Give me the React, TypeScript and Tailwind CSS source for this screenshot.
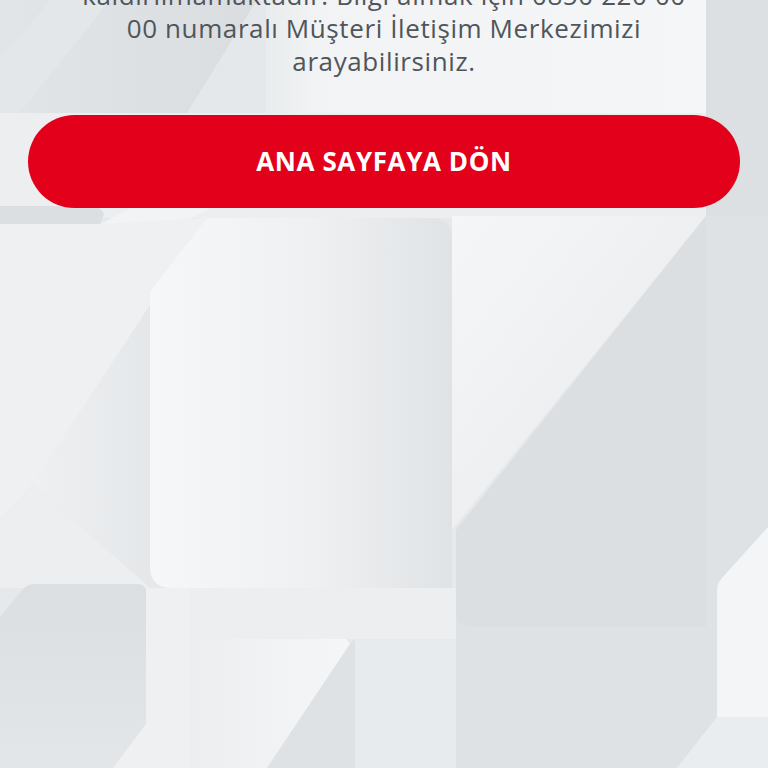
import React from 'react';

function Backdrop() {
  return (
    <svg
      className="absolute inset-0 h-full w-full"
      viewBox="0 0 768 768"
      preserveAspectRatio="none"
      aria-hidden="true"
    >
      <defs>
        <linearGradient id="bigCard" x1="0" y1="0" x2="1" y2="0">
          <stop offset="0" stopColor="#f6f7f8" />
          <stop offset="0.55" stopColor="#eef0f2" />
          <stop offset="1" stopColor="#e0e3e5" />
        </linearGradient>
        <linearGradient id="leftShade" x1="0" y1="0" x2="1" y2="0">
          <stop offset="0" stopColor="#eef0f2" />
          <stop offset="1" stopColor="#e0e3e5" />
        </linearGradient>
        <linearGradient id="lightWedge" x1="0" y1="0" x2="1" y2="1">
          <stop offset="0" stopColor="#f5f6f7" />
          <stop offset="1" stopColor="#e6e9eb" />
        </linearGradient>
        <linearGradient id="lowCard" x1="0" y1="0" x2="1" y2="0">
          <stop offset="0" stopColor="#eceef0" />
          <stop offset="1" stopColor="#f4f6f7" />
        </linearGradient>
        <linearGradient id="topLeft" x1="0" y1="0" x2="1" y2="0">
          <stop offset="0" stopColor="#e2e5e7" />
          <stop offset="1" stopColor="#dadde0" />
        </linearGradient>
        <linearGradient id="lowTile" x1="0" y1="0" x2="0" y2="1">
          <stop offset="0" stopColor="#dcdfe2" />
          <stop offset="1" stopColor="#e3e6e8" />
        </linearGradient>
        <linearGradient id="topPanel" x1="0" y1="0" x2="1" y2="0">
          <stop offset="0" stopColor="#e9ecee" />
          <stop offset="0.12" stopColor="#f1f3f4" />
          <stop offset="1" stopColor="#f4f6f7" />
        </linearGradient>
      </defs>

      <rect x="0" y="0" width="768" height="768" fill="#e6e9eb" />

      {/* band behind the text */}
      <rect x="0" y="0" width="268" height="113" fill="url(#topLeft)" />
      <polygon points="0,60 50,0 110,0 20,113 0,113" fill="#e4e7e9" />
      <polygon points="187,113 257,0 268,0 268,113" fill="#e5e8ea" />
      <rect x="266" y="0" width="440" height="113" fill="url(#topPanel)" />
      <rect x="706" y="0" width="62" height="218" fill="#dde0e3" />

      {/* band behind the button */}
      <rect x="0" y="113" width="706" height="105" fill="#eceef0" />
      <path d="M0 206 H92 Q100 206 104 214 L100 224 H0 Z" fill="#dcdfe2" />
      <polygon points="90,230 130,208 210,208 170,230" fill="#f1f3f4" />

      {/* left upper area */}
      <polygon points="0,224 100,224 207,218 33,484 0,520" fill="#eef0f2" />
      <polygon points="207,218 150,300 150,588 33,484" fill="url(#leftShade)" />
      <polygon points="0,520 33,484 150,588 0,588" fill="#eceef0" />

      {/* big light card */}
      <path
        d="M207 218 H432 Q452 218 452 240 V588 H172 Q150 588 150 566 V292 Z"
        fill="url(#bigCard)"
      />

      {/* wedge between card and dark column */}
      <polygon points="452,216 706,216 452,530" fill="url(#lightWedge)" />

      {/* dark right column */}
      <polygon points="706,216 768,216 768,527 717,584 717,768 456,768 456,530" fill="#dfe2e4" />
      <path d="M456 530 L706 216 V627 H472 Q456 627 456 611 Z" fill="#dcdfe2" />

      {/* right light tile */}
      <path d="M768 527 L722 578 Q717 584 717 592 V717 H768 Z" fill="#f3f5f6" />
      <polygon points="717,717 768,717 768,768 677,768" fill="#eaedef" />

      {/* strip under the card */}
      <rect x="146" y="588" width="310" height="51" fill="#eceef0" />

      {/* bottom left dark tile */}
      <path d="M0 617 L24 588 Q28 584 36 584 H138 Q146 584 146 592 V724 L113 768 H0 Z" fill="url(#lowTile)" />
      <polygon points="146,588 190,588 190,768 113,768 146,724" fill="#eef0f2" />

      {/* bottom middle light tile */}
      <polygon points="190,639 346,639 350,644 267,768 190,768" fill="url(#lowCard)" />
      <polygon points="350,644 355,639 355,768 267,768" fill="#dfe2e4" />
      <rect x="355" y="639" width="101" height="129" fill="#e8ebed" />
    </svg>
  );
}

export default function App() {
  return (
    <div className="relative min-h-screen overflow-hidden bg-[#e6e9eb]">
      <Backdrop />
      <div className="relative flex flex-col items-center px-[28px]">
        <p
          className="-mt-[21px] text-center text-[26px] leading-[33px] tracking-[0.6px] text-[#50555b]"
          style={{ fontFamily: '"Open Sans", "Noto Sans", sans-serif' }}
        >
          <span className="block whitespace-nowrap">kaldırılmamaktadır. Bilgi almak için 0850 220 00</span>
          <span className="block whitespace-nowrap">00 numaralı Müşteri İletişim Merkezimizi</span>
          <span className="block whitespace-nowrap">arayabilirsiniz.</span>
        </p>
        <button
          type="button"
          className="mt-[37px] flex h-[93px] w-full items-center justify-center rounded-full bg-[#e2001a] text-[26px] font-bold tracking-[0.6px] text-white"
          style={{ fontFamily: '"Open Sans", "Noto Sans", sans-serif' }}
        >
          ANA SAYFAYA DÖN
        </button>
      </div>
    </div>
  );
}
